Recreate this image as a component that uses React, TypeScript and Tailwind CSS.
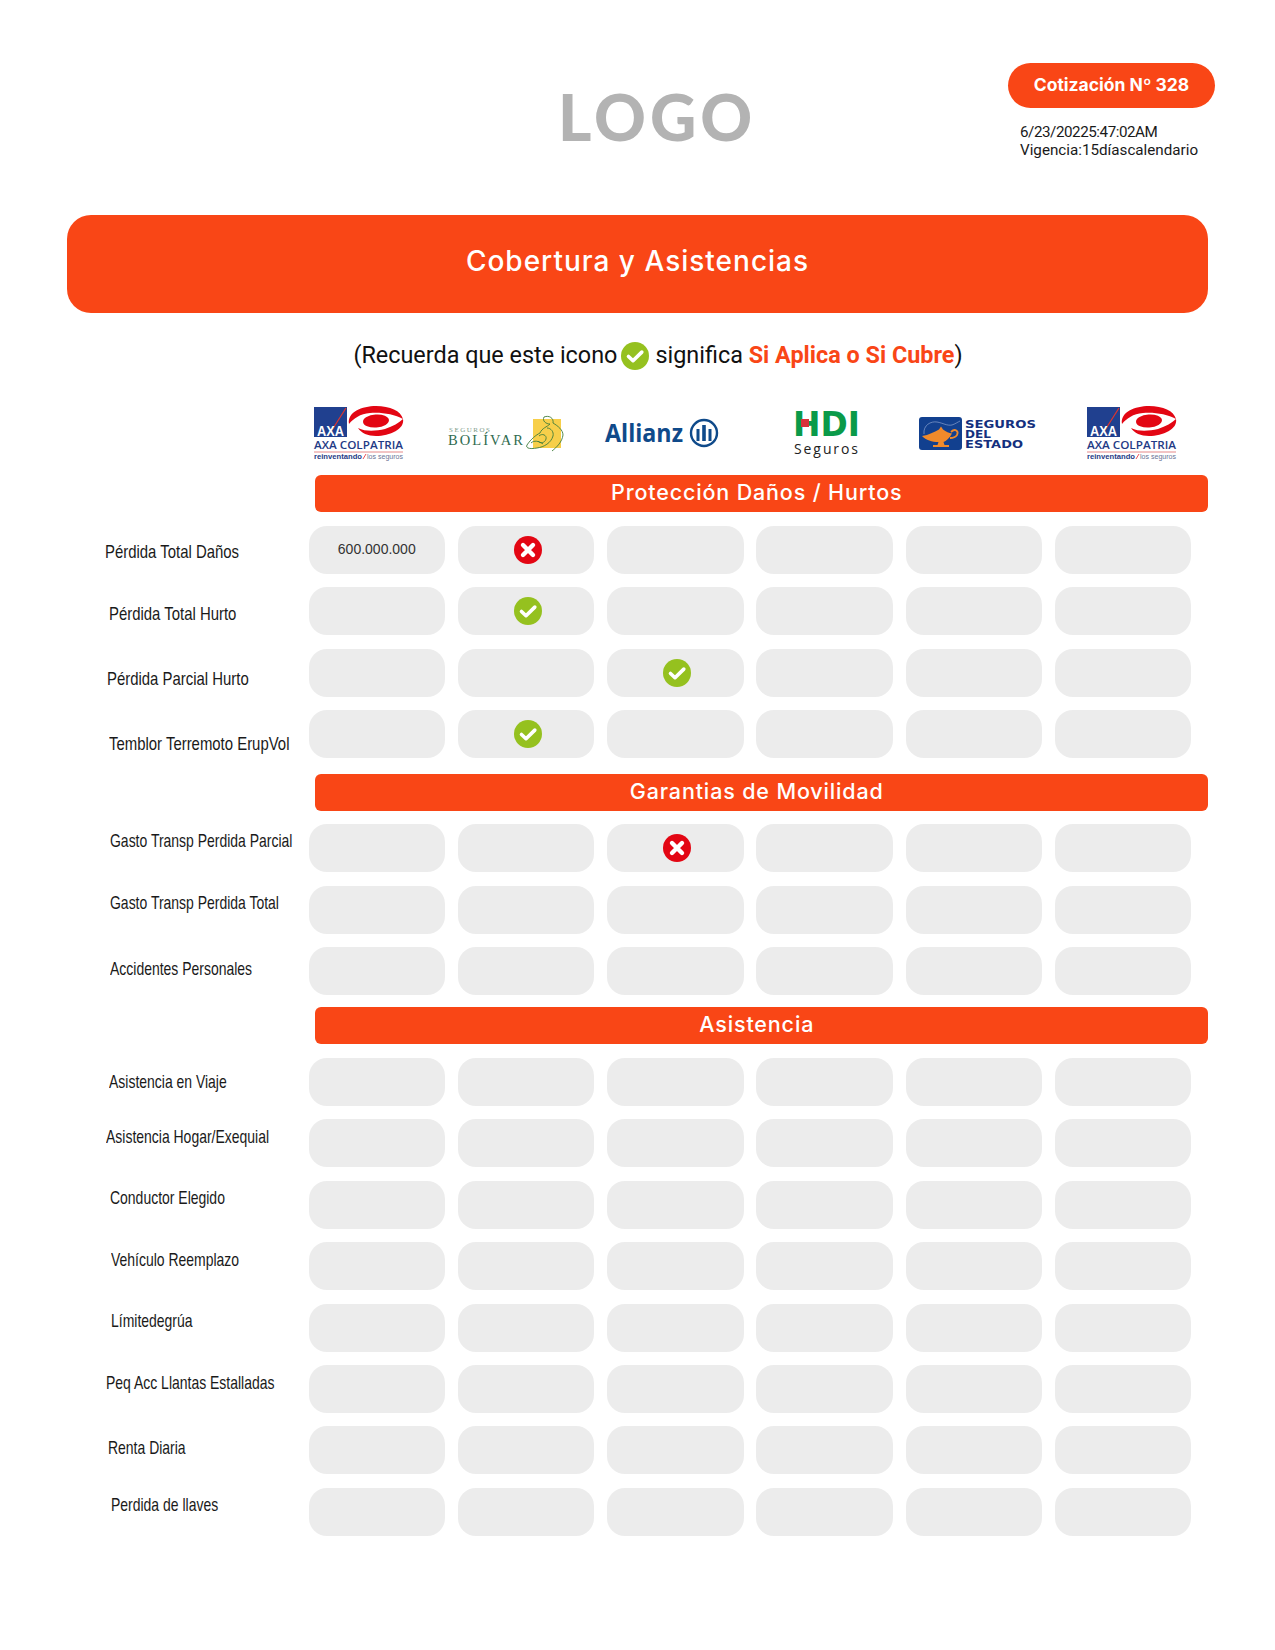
import React from "react";

type Mark = "check" | "cross" | "text" | null;

type Row = {
  label: string;
  labelClass: string;
  cells?: Record<number, Mark>;
};

const sectionOne: Row[] = [
  { label: "Pérdida Total Daños", labelClass: "pl-[105px] translate-y-[2px]", cells: { 0: "text", 1: "cross" } },
  { label: "Pérdida Total Hurto", labelClass: "pl-[109px] translate-y-[3px]", cells: { 1: "check" } },
  { label: "Pérdida Parcial Hurto", labelClass: "pl-[107px] translate-y-[6px]", cells: { 2: "check" } },
  { label: "Temblor Terremoto ErupVol", labelClass: "pl-[109px] translate-y-[10px]", cells: { 1: "check" } },
];

const sectionTwo: Row[] = [
  { label: "Gasto Transp Perdida Parcial", labelClass: "pl-[110px] -translate-y-[7px]", cells: { 2: "cross" } },
  { label: "Gasto Transp Perdida Total", labelClass: "pl-[110px] -translate-y-[6px]" },
  { label: "Accidentes Personales", labelClass: "pl-[110px] -translate-y-[2px]" },
];

const sectionThree: Row[] = [
  { label: "Asistencia en Viaje", labelClass: "pl-[109px]" },
  { label: "Asistencia Hogar/Exequial", labelClass: "pl-[106px] -translate-y-[6px]" },
  { label: "Conductor Elegido", labelClass: "pl-[110px] -translate-y-[6px]" },
  { label: "Vehículo Reemplazo", labelClass: "pl-[111px] -translate-y-[6px]" },
  { label: "Límitedegrúa", labelClass: "pl-[111px] -translate-y-[6px]" },
  { label: "Peq Acc Llantas Estalladas", labelClass: "pl-[106px] -translate-y-[6px]" },
  { label: "Renta Diaria", labelClass: "pl-[108px] -translate-y-[2px]" },
  { label: "Perdida de llaves", labelClass: "pl-[111px] -translate-y-[6px]" },
];

const CheckIcon = ({ className }: { className: string }) => (
  <svg viewBox="0 0 28 28" className={className}>
    <circle cx="14" cy="14" r="14" fill="#95c11f" />
    <path d="M7.5 14.5l4.5 4.2 8.8-8.6" fill="none" stroke="#fff" strokeWidth="3.6" strokeLinecap="round" strokeLinejoin="round" />
  </svg>
);

const CrossIcon = ({ className }: { className: string }) => (
  <svg viewBox="0 0 28 28" className={className}>
    <circle cx="14" cy="14" r="14" fill="#e30613" />
    <path d="M9 9l10 10M19 9L9 19" fill="none" stroke="#fff" strokeWidth="4.4" strokeLinecap="round" />
  </svg>
);

const AxaLogo = () => (
  <svg viewBox="0 0 90 55" className="w-[90px] h-[55px] overflow-visible">
    <rect x="0" y="1" width="33" height="30" fill="#20408f" />
    <path d="M32 2L18 24" stroke="#e2342c" strokeWidth="1.2" />
    <text x="3" y="30" fontFamily="Liberation Sans" fontWeight="700" fontSize="15" fill="#fff" textLength="27" lengthAdjust="spacingAndGlyphs">AXA</text>
    <g fill="#e30613">
      <path d="M35 18C33 6 48 0 62 0C76 0 87 5 89 13C80 8 67 6 56 7C46 8 40 12 35 18Z" />
      <path d="M89 13C91 23 76 30 62 30C54 30 47 27 44 22C52 26 62 25 71 23C79 20 85 17 89 13Z" />
      <ellipse cx="62" cy="15" rx="13" ry="6.5" transform="rotate(-4 62 15)" />
    </g>
    <text x="0" y="43" fontFamily="Open Sans" fontSize="10" fontWeight="600" fill="#1f3a85" textLength="89" lengthAdjust="spacingAndGlyphs">AXA COLPATRIA</text>
    <rect x="0" y="45.5" width="89" height="1" fill="#e58a8a" />
    <text x="0" y="53" fontFamily="Liberation Sans" fontSize="6.5" fontWeight="700" fill="#1f3a85" textLength="48" lengthAdjust="spacingAndGlyphs">reinventando</text>
    <path d="M49 53l3-5" stroke="#e30613" strokeWidth="0.7" />
    <text x="53" y="53" fontFamily="Liberation Sans" fontSize="6.5" fill="#6a7396" textLength="36" lengthAdjust="spacingAndGlyphs">los seguros</text>
  </svg>
);

const BolivarLogo = () => (
  <svg viewBox="0 0 120 36" className="w-[120px] h-[36px] overflow-visible">
    <text x="2" y="16" fontFamily="Liberation Serif" fontSize="7" fill="#7d9a88" textLength="41" lengthAdjust="spacing">SEGUROS</text>
    <text x="1" y="29" fontFamily="Liberation Serif" fontSize="14.5" fill="#2f6b4f" textLength="75" lengthAdjust="spacing">BOLÍVAR</text>
    <rect x="86" y="3" width="28" height="29" fill="#f7cf4a" />
    <g fill="none" stroke="#3f7d3c" strokeWidth="0.9">
      <path d="M97 1C102-1 107 2 106 7C111 10 116 14 116 19C115 26 110 31 105 35" />
      <path d="M97 1C95 5 99 8 103 8C100 11 95 12 93 17C89 19 84 23 80 29C78 33 85 33 90 32C97 31 104 27 106 20C107 16 104 12 100 12" />
      <path d="M92 20C95 17 100 19 99 23C98 27 93 28 91 25" />
      <path d="M84 27C87 24 92 25 96 28" />
    </g>
  </svg>
);

const AllianzLogo = () => (
  <svg viewBox="0 0 114 32" className="w-[114px] h-[32px] overflow-visible">
    <text x="0" y="24" fontFamily="Open Sans" fontWeight="700" fontSize="25" fill="#0f4a8a" textLength="78" lengthAdjust="spacingAndGlyphs">Allianz</text>
    <circle cx="99" cy="15" r="13" fill="none" stroke="#0f4a8a" strokeWidth="2.4" />
    <path d="M91.5 11h3v12h-3zM97.2 7h3.6v16h-3.6zM103.5 11h3v12h-3z" fill="#0f4a8a" />
  </svg>
);

const HdiLogo = () => (
  <svg viewBox="0 0 68 48" className="w-[68px] h-[48px] overflow-visible translate-y-[1px]">
    <text x="0" y="25" fontFamily="DejaVu Sans" fontWeight="700" fontSize="33" fill="#0a9a49" textLength="67" lengthAdjust="spacingAndGlyphs">HDI</text>
    <rect x="8" y="8" width="8" height="8" fill="#d9303a" />
    <text x="1" y="43" fontFamily="Open Sans" fontSize="14" fill="#222" textLength="64" lengthAdjust="spacing">Seguros</text>
  </svg>
);

const EstadoLogo = () => (
  <svg viewBox="0 0 118 34" className="w-[118px] h-[34px] overflow-visible">
    <rect x="0" y="0" width="43" height="33" rx="3" fill="#12408f" />
    <path d="M3 19C10 18 15 15 20 12.5L22 9.5L24 12.5C27 15 30 16 33 16.5C31 21 27 24 24.5 25L25.5 28H30V30H14V28H18.5L19.5 25C13 25 7 23 3 19Z" fill="#f08a2b" />
    <path d="M32 15C36 11 40 14 38 18C36 21 33 21 31 21" fill="none" stroke="#f08a2b" strokeWidth="1.8" />
    <path d="M5 17C4 8 12 4 18 5C24 6 28 9 33 8C36 7 39 5 41 4" fill="none" stroke="#8aa0cf" strokeWidth="0.7" />
    <g fontFamily="DejaVu Sans" fontWeight="700" fontSize="10.5" fill="#14307e">
      <text x="46" y="10.5" textLength="71" lengthAdjust="spacingAndGlyphs">SEGUROS</text>
      <text x="46" y="20.5" textLength="26" lengthAdjust="spacingAndGlyphs">DEL</text>
      <text x="46" y="30.5" textLength="58" lengthAdjust="spacingAndGlyphs">ESTADO</text>
    </g>
  </svg>
);

const Cell = ({ mark }: { mark: Mark }) => (
  <div className="w-[136.5px] h-12 shrink-0 rounded-[18px] bg-[#ececec] flex items-center justify-center">
    {mark === "text" && <span className="font-['Liberation_Sans',sans-serif] text-[14px] text-[#333] -translate-y-[1px]">600.000.000</span>}
    {mark === "check" && <CheckIcon className="w-7 h-7 translate-x-[2px]" />}
    {mark === "cross" && <CrossIcon className="w-7 h-7 translate-x-[2px]" />}
  </div>
);

const TableRow = ({ row, squeeze }: { row: Row; squeeze: string }) => (
  <div className="flex h-12">
    <div className={`w-[308.5px] shrink-0 flex items-center whitespace-nowrap font-['Liberation_Sans',sans-serif] text-[19px] text-[#1a1a1a] ${row.labelClass}`}>
      {/* no narrow face is installed, so the label is squeezed */}
      <span className={`origin-left ${squeeze}`}>{row.label}</span>
    </div>
    <div className="flex gap-[12.8px]">
      {[0, 1, 2, 3, 4, 5].map((i) => (
        <Cell key={i} mark={row.cells?.[i] ?? null} />
      ))}
    </div>
  </div>
);

const SectionBar = ({ title }: { title: string }) => (
  <div className="ml-[314.5px] w-[893.5px] h-[37px] pr-[9px] pb-[3px] rounded-[6px] bg-[#f94616] flex items-center justify-center font-['Inter',sans-serif] font-medium text-[21.5px] tracking-[0.85px] text-white">
    {title}
  </div>
);

export default function App() {
  return (
    <div className="w-[1275px] h-[1650px] bg-white overflow-hidden">
      {/* Header */}
      <div className="flex h-[215px] pt-[63px]">
        <div className="ml-[558px] mt-[16px] h-[76px] font-['Lato',sans-serif] font-black text-[64px] leading-[76px] tracking-[4px] text-[#b3b3b3]">
          LOGO
        </div>
        <div className="ml-auto mr-[60px] w-[207px]">
          <div className="h-[45px] rounded-full bg-[#f94616] flex items-center justify-center font-['Inter',sans-serif] font-bold text-[17.5px] text-white">
            Cotización Nº 328
          </div>
          <div className="mt-[15px] pl-[12px] font-['Roboto',sans-serif] text-[15.2px] leading-[18px] text-[#1a1a1a]">
            <div className="tracking-[-0.45px]">6/23/20225:47:02AM</div>
            <div>Vigencia:15díascalendario</div>
          </div>
        </div>
      </div>

      {/* Banner */}
      <div className="ml-[67px] w-[1141px] h-[98px] pb-[6px] rounded-[24px] bg-[#f94616] flex items-center justify-center font-['Inter',sans-serif] font-medium text-[28px] tracking-[1px] text-white">
        Cobertura y Asistencias
      </div>

      <div className="mt-[27px] h-[32px] pl-[41px] flex items-center justify-center gap-[4px] font-['Roboto',sans-serif] text-[23.4px] text-[#111]">
        <span>(Recuerda que este icono</span>
        <CheckIcon className="w-7 h-7" />
        <span className="ml-[2px]">
          significa <b className="font-bold text-[#f94616]">Si Aplica o Si Cubre</b>)
        </span>
      </div>

      {/* Logos */}
      <div className="mt-[34px] h-[55px] ml-[314px] flex items-center">
        <div className="w-[133px]"><AxaLogo /></div>
        <div className="w-[158px]"><BolivarLogo /></div>
        <div className="w-[188px]"><AllianzLogo /></div>
        <div className="w-[126px]"><HdiLogo /></div>
        <div className="w-[168px]"><EstadoLogo /></div>
        <div className="w-[90px]"><AxaLogo /></div>
      </div>

      <div className="mt-[14px]">
        <SectionBar title="Protección Daños / Hurtos" />
        <div className="mt-[14px] flex flex-col gap-[13.4px]">
          {sectionOne.map((row) => (
            <TableRow key={row.label} row={row} squeeze="scale-x-[0.785]" />
          ))}
        </div>
      </div>

      <div className="mt-[16px]">
        <SectionBar title="Garantias de Movilidad" />
        <div className="mt-[13px] flex flex-col gap-[13.4px]">
          {sectionTwo.map((row) => (
            <TableRow key={row.label} row={row} squeeze="scale-x-[0.735]" />
          ))}
        </div>
      </div>

      <div className="mt-[12px]">
        <SectionBar title="Asistencia" />
        <div className="mt-[14px] flex flex-col gap-[13.4px]">
          {sectionThree.map((row) => (
            <TableRow key={row.label} row={row} squeeze="scale-x-[0.735]" />
          ))}
        </div>
      </div>
    </div>
  );
}
